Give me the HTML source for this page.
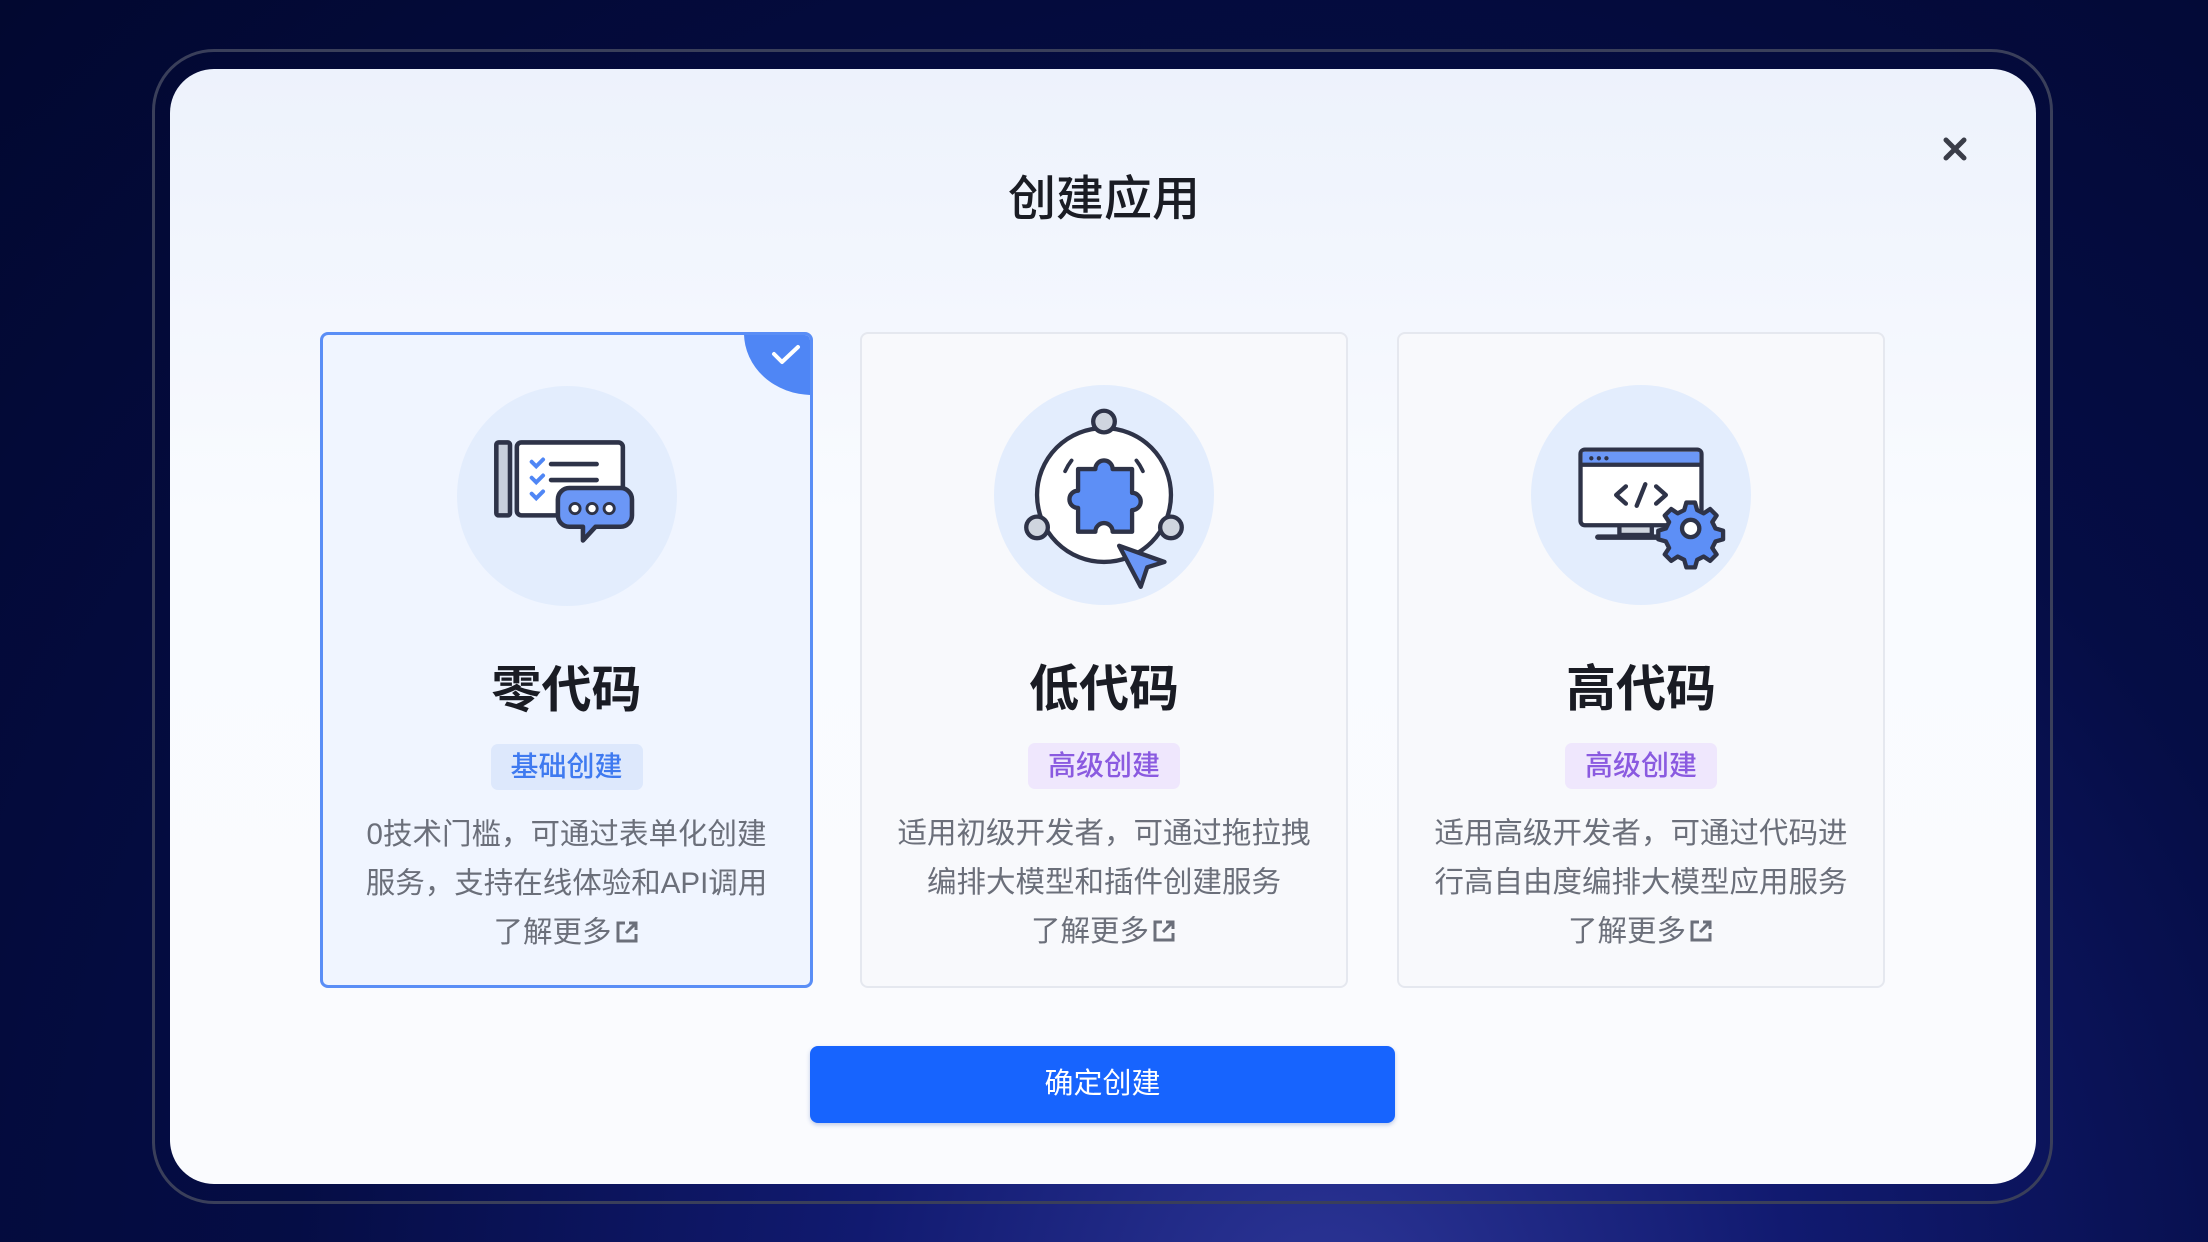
<!DOCTYPE html>
<html><head><meta charset="utf-8">
<style>
*{margin:0;padding:0;box-sizing:border-box}
body{width:2208px;height:1242px;overflow:hidden;background:radial-gradient(ellipse at 60% 105%,#2c3596 0%,#111a70 25%,#050d45 55%,#020830 100%);font-family:"Liberation Sans","Noto Sans CJK SC",sans-serif;position:relative}
.bezel{position:absolute;left:152px;top:49px;width:1901px;height:1155px;border:3px solid #3a3f5a;border-radius:62px}
.panel{position:absolute;left:170px;top:69px;width:1866px;height:1115px;border-radius:44px;background:linear-gradient(#edf2fc,#f9fbff 40%,#fafbfe)}
.title{position:absolute;left:0;width:2208px;top:170px;text-align:center;font-size:48px;font-weight:500;color:#1a1c24;line-height:60px}
.close{position:absolute;left:1942px;top:136px}
.card{position:absolute;top:332px;width:488px;height:656px;border:2px solid #e5e8ef;border-radius:8px;background:#f8f9fc;overflow:hidden}
.card.sel{border:3px solid #5a8ef6;background:#f0f5ff;width:493px}
.corner{position:absolute;right:-2px;top:-2px;width:68px;height:62px;background:#4f86f5;border-bottom-left-radius:100%}
.circ{position:absolute;left:50%;top:51px;width:220px;height:220px;margin-left:-110px;border-radius:50%;background:#e3edfd}
.circ svg{position:absolute;left:0;top:0}
.ct{position:absolute;left:0;right:0;top:325px;text-align:center;font-size:50px;font-weight:bold;color:#1a1c24;line-height:60px}
.tag{position:absolute;left:50%;top:409px;height:46px;width:152px;margin-left:-76px;border-radius:7px;text-align:center;font-size:28px;line-height:46px;font-weight:500}
.tb{background:#dde8fc;color:#3f7af0}
.tp{background:#efe7fd;color:#8a5ae0}
.desc{position:absolute;left:-10px;right:-10px;top:475px;text-align:center;font-size:29.5px;line-height:49px;color:#6b6f7a}
.ext{display:inline-block;vertical-align:-3px;margin-left:2px}
.btn{position:absolute;left:810px;top:1046px;width:585px;height:77px;border-radius:8px;background:#1764fe;color:#fff;font-size:29px;text-align:center;line-height:77px;box-shadow:0 2px 4px rgba(20,60,160,.25)}
</style></head><body>
<div class="bezel"></div>
<div class="panel"></div>
<div class="title">创建应用</div>
<svg class="close" width="26" height="26" viewBox="0 0 26 26"><path d="M4 4L22 22M22 4L4 22" stroke="#3a3d48" stroke-width="5" stroke-linecap="round"/></svg>

<div class="card sel" style="left:320px">
  <div class="corner"><svg width="68" height="62" viewBox="0 0 68 62"><path d="M30 21l8 8 16-15" stroke="#fff" stroke-width="4" fill="none" stroke-linecap="round" stroke-linejoin="round"/></svg></div>
  <div class="circ"><svg width="220" height="220" viewBox="0 0 220 220"><g transform="translate(110 110) scale(1.14) translate(-110 -110)">
    <rect x="48" y="63" width="12" height="64" rx="2" fill="#c7cedb" stroke="#2e3348" stroke-width="4"/>
    <rect x="66" y="63" width="93" height="64" rx="4" fill="#fff" stroke="#2e3348" stroke-width="4"/>
    <path d="M79 80l4 4 6-6M79 94l4 4 6-6M79 108l4 4 6-6" stroke="#4f86f5" stroke-width="3.5" fill="none" stroke-linecap="round"/>
    <path d="M96 82h40M96 96h40" stroke="#2e3348" stroke-width="4" stroke-linecap="round"/>
    <path d="M112 103h45a10 10 0 0 1 10 10v14a10 10 0 0 1-10 10h-22l-11 12v-12h-12a10 10 0 0 1-10-10v-14a10 10 0 0 1 10-10z" fill="#6b97f6" stroke="#2e3348" stroke-width="4" stroke-linejoin="round"/>
    <circle cx="117" cy="121" r="4.5" fill="#fff" stroke="#2e3348" stroke-width="2.5"/><circle cx="132" cy="121" r="4.5" fill="#fff" stroke="#2e3348" stroke-width="2.5"/><circle cx="147" cy="121" r="4.5" fill="#fff" stroke="#2e3348" stroke-width="2.5"/>
  </g></svg></div>
  <div class="ct">零代码</div>
  <div class="tag tb">基础创建</div>
  <div class="desc">0技术门槛，可通过表单化创建<br>服务，支持在线体验和API调用<br>了解更多<svg class="ext" width="26" height="26" viewBox="0 0 26 26"><path d="M11 4H4v18h18v-7M15 4h7v7M22 4L12 14" stroke="#6b6f7a" stroke-width="3" fill="none"/></svg></div>
</div>

<div class="card" style="left:860px">
  <div class="circ"><svg width="220" height="220" viewBox="0 0 220 220"><g transform="translate(110 110) scale(1.08) translate(-110 -110)">
    <circle cx="110" cy="110" r="62" fill="#fff" stroke="#2e3348" stroke-width="4"/>
    <path d="M74 88a46 46 0 0 1 6-10M140 78a46 46 0 0 1 6 10" stroke="#2e3348" stroke-width="3.5" fill="none" stroke-linecap="round"/>
    <path d="M86 86h16a8 8 0 1 1 16 0h18v22a8 8 0 1 1 0 16v20h-18a8 8 0 1 0-16 0h-16v-22a8 8 0 1 1 0-16z" fill="#5d8ff6" stroke="#2e3348" stroke-width="4" stroke-linejoin="round"/>
    <circle cx="110" cy="42" r="10" fill="#cfd5df" stroke="#2e3348" stroke-width="4"/>
    <circle cx="48" cy="140" r="10" fill="#cfd5df" stroke="#2e3348" stroke-width="4"/>
    <circle cx="172" cy="140" r="10" fill="#cfd5df" stroke="#2e3348" stroke-width="4"/>
    <path d="M124 157l42 15-16 5-6 18z" fill="#6b97f6" stroke="#2e3348" stroke-width="4" stroke-linejoin="round"/>
  </g></svg></div>
  <div class="ct">低代码</div>
  <div class="tag tp">高级创建</div>
  <div class="desc">适用初级开发者，可通过拖拉拽<br>编排大模型和插件创建服务<br>了解更多<svg class="ext" width="26" height="26" viewBox="0 0 26 26"><path d="M11 4H4v18h18v-7M15 4h7v7M22 4L12 14" stroke="#6b6f7a" stroke-width="3" fill="none"/></svg></div>
</div>

<div class="card" style="left:1397px">
  <div class="circ"><svg width="220" height="220" viewBox="0 0 220 220"><g transform="translate(110 110) scale(1.08) translate(-110 -110)">
    <rect x="90" y="133" width="30" height="14" fill="#cfd5df" stroke="#2e3348" stroke-width="4"/>
    <path d="M70 149h70" stroke="#2e3348" stroke-width="5" stroke-linecap="round"/>
    <rect x="54" y="68" width="112" height="70" rx="4" fill="#fff" stroke="#2e3348" stroke-width="4"/>
    <rect x="56" y="70" width="108" height="12" fill="#6b97f6"/>
    <path d="M54 82h112" stroke="#2e3348" stroke-width="4"/>
    <circle cx="64" cy="76" r="2" fill="#2e3348"/><circle cx="71" cy="76" r="2" fill="#2e3348"/><circle cx="78" cy="76" r="2" fill="#2e3348"/>
    <path d="M96 102l-9 8 9 8M124 102l9 8-9 8M114 100l-8 20" stroke="#2e3348" stroke-width="4" fill="none" stroke-linecap="round" stroke-linejoin="round"/>
    <path d="M152 117l8 0 2 7 6 3 6-4 6 6-4 6 3 6 7 2v8l-7 2-3 6 4 6-6 6-6-4-6 3-2 7h-8l-2-7-6-3-6 4-6-6 4-6-3-6-7-2v-8l7-2 3-6-4-6 6-6 6 4 6-3z" fill="#5d8ff6" stroke="#2e3348" stroke-width="4" stroke-linejoin="round"/>
    <circle cx="156" cy="141" r="8" fill="#fff" stroke="#2e3348" stroke-width="4"/>
  </g></svg></div>
  <div class="ct">高代码</div>
  <div class="tag tp">高级创建</div>
  <div class="desc">适用高级开发者，可通过代码进<br>行高自由度编排大模型应用服务<br>了解更多<svg class="ext" width="26" height="26" viewBox="0 0 26 26"><path d="M11 4H4v18h18v-7M15 4h7v7M22 4L12 14" stroke="#6b6f7a" stroke-width="3" fill="none"/></svg></div>
</div>

<div class="btn">确定创建</div>
</body></html>
